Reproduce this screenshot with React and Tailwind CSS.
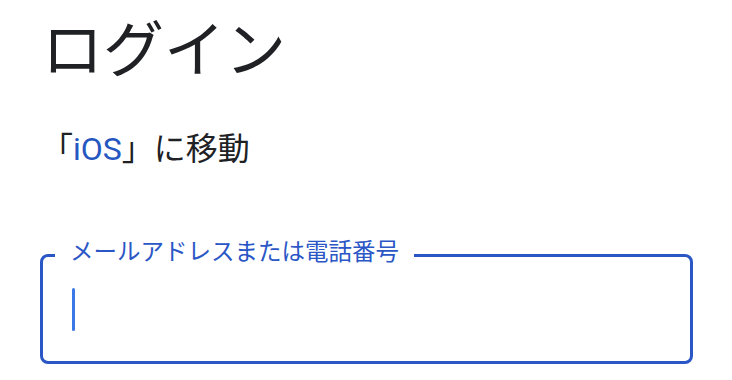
export default function App() {
  return (
    <div
      className="w-[732px] h-[380px] bg-white overflow-hidden pl-[40px] pr-[39px]"
      style={{ fontFamily: 'Roboto, "Noto Sans CJK JP", sans-serif' }}
    >
      <h1 className="text-[61px] leading-none text-[#202124] font-normal pt-[21px] ml-[2px]">
        ログイン
      </h1>
      <p className="mt-[51px] ml-[1px] text-[32px] leading-none text-[#202124]">
        「<span className="text-[#2657c1]">iOS</span>」に移動
      </p>
      <div className="relative mt-[89px] h-[110px] rounded-[8px] border-[3px] border-[#2a56c6]">
        <span className="absolute -top-[19px] left-[12px] bg-white px-[15px] text-[23.5px] leading-[28px] text-[#2a56c6]">
          メールアドレスまたは電話番号
        </span>
        <div className="absolute left-[29px] top-[31px] w-[3px] h-[43px] rounded-full bg-[#3b78e7]" />
      </div>
    </div>
  );
}
